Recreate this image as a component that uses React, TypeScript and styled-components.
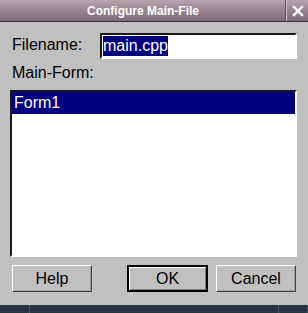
import React from "react";
import styled, { createGlobalStyle } from "styled-components";

const Global = createGlobalStyle`
  html, body { margin: 0; padding: 0; background: #c0c0c0; }
  #root { width: 308px; height: 313px; overflow: hidden; }
`;

const Window = styled.div`
  width: 308px;
  height: 313px;
  display: flex;
  flex-direction: column;
  font-family: "Liberation Sans", Arial, sans-serif;
`;

const TitleBar = styled.div`
  height: 21px;
  display: flex;
  background: linear-gradient(to bottom, #b5a5ad 0%, #96848e 50%, #7c6a75 100%);
  border-bottom: 1px solid #3a3438;
`;

const Title = styled.div`
  flex: 1;
  display: flex;
  align-items: center;
  justify-content: center;
  color: #ffffff;
  font-weight: bold;
  font-size: 12px;
  padding-top: 1px;
`;

const CloseBox = styled.div`
  width: 21px;
  display: flex;
  align-items: center;
  justify-content: center;
  border-left: 1px solid #c9bcc3;
  box-shadow: -1px 0 0 #5e4f58;
`;

const Body = styled.div`
  flex: 1;
  background: #c0c0c0;
  padding: 11px 11px 0 10px;
  display: flex;
  flex-direction: column;
`;

const FieldRow = styled.div`
  display: flex;
  align-items: flex-start;
  height: 26px;
`;

const Label = styled.div<{ $w?: number }>`
  box-sizing: border-box;
  font-size: 16px;
  line-height: 18px;
  color: #000;
  padding-left: 2px;
  width: ${(p) => (p.$w ? `${p.$w}px` : "auto")};
`;

const FieldLabel = styled(Label)`
  margin-top: 3px;
`;

const SectionLabel = styled(Label)`
  margin-top: 5px;
  margin-bottom: 8px;
`;

const Input = styled.div`
  box-sizing: border-box;
  width: 197px;
  height: 26px;
  background: #fff;
  border: 2px solid;
  border-color: #1a1a1a #ffffff #ffffff #1a1a1a;
  display: flex;
  align-items: center;
  padding-left: 1px;
`;

const Selected = styled.span`
  background: #000080;
  color: #fff;
  font-size: 16px;
  line-height: 20px;
`;

const ListBox = styled.div`
  box-sizing: border-box;
  height: 167px;
  background: #fff;
  border: 2px solid;
  border-color: #1a1a1a #ffffff #ffffff #1a1a1a;
`;

const ListItem = styled.div<{ $selected?: boolean }>`
  height: 22px;
  line-height: 22px;
  padding-left: 2px;
  font-size: 16px;
  background: ${(p) => (p.$selected ? "#000080" : "transparent")};
  color: ${(p) => (p.$selected ? "#fff" : "#000")};
`;

const ButtonRow = styled.div`
  display: flex;
  margin: 8px 1px 0 2px;
  gap: 8px;
`;

const Spacer = styled.div`
  flex: 1;
`;

const Button = styled.button<{ $default?: boolean; $w: number }>`
  box-sizing: border-box;
  width: ${(p) => p.$w}px;
  height: 27px;
  background: #c0c0c0;
  font-family: "Liberation Sans", Arial, sans-serif;
  font-size: 16px;
  color: #000;
  padding: 0;
  ${(p) =>
    p.$default
      ? `border: 2px solid #000; box-shadow: inset 1px 1px 0 #ffffff, inset -1px -1px 0 #808080;`
      : `border: 1px solid; border-color: #ffffff #404040 #404040 #ffffff; box-shadow: inset -1px -1px 0 #a0a0a0;`}
`;

const Taskbar = styled.div`
  height: 8px;
  background: #2c3245;
  display: flex;
`;

const TaskSeg = styled.div<{ $w?: number }>`
  width: ${(p) => (p.$w ? `${p.$w}px` : "auto")};
  flex: ${(p) => (p.$w ? "none" : 1)};
  border-right: 1px solid #4d5468;
`;

export default function App() {
  return (
    <>
      <Global />
      <Window>
        <TitleBar>
          <Title>Configure Main-File</Title>
          <CloseBox>
            <svg width="12" height="12" viewBox="0 0 12 12">
              <path d="M2 2 L10 10 M10 2 L2 10" stroke="#ffffff" strokeWidth="2.4" strokeLinecap="square" />
            </svg>
          </CloseBox>
        </TitleBar>
        <Body>
          <FieldRow>
            <FieldLabel $w={90}>Filename:</FieldLabel>
            <Input>
              <Selected>main.cpp</Selected>
            </Input>
          </FieldRow>
          <SectionLabel>Main-Form:</SectionLabel>
          <ListBox>
            <ListItem $selected>Form1</ListItem>
          </ListBox>
          <ButtonRow>
            <Button $w={80}>Help</Button>
            <Spacer />
            <Button $w={81} $default>OK</Button>
            <Button $w={80}>Cancel</Button>
          </ButtonRow>
        </Body>
        <Taskbar>
          <TaskSeg $w={29} />
          <TaskSeg />
          <TaskSeg $w={28} />
        </Taskbar>
      </Window>
    </>
  );
}
